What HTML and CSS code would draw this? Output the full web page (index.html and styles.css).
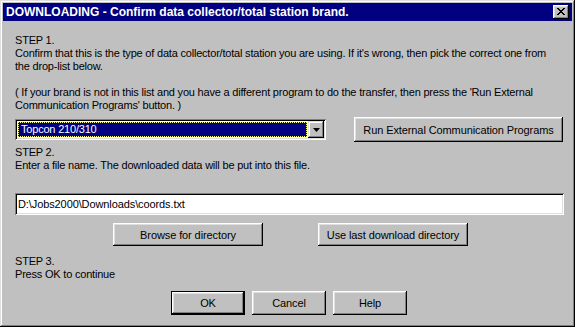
FILE: index.html
```html
<!DOCTYPE html>
<html lang="en">
<head>
  <meta charset="UTF-8">
  <title>DOWNLOADING</title>
  <link rel="stylesheet" href="styles.css">
</head>
<body>

  <div class="window">
    <div class="titlebar">
      <span class="title">DOWNLOADING - Confirm data collector/total station brand.</span>
      <button class="close" title="Close">
        <svg width="8" height="7" viewBox="0 0 8 7"><path d="M0 0h2v1h1v1h2v-1h1v-1h2v1h-1v1h-1v1h-1v1h1v1h1v1h1v1h-2v-1h-1v-1h-2v1h-1v1h-2v-1h1v-1h1v-1h1v-1h-1v-1h-1v-1h-1z" fill="#000"/></svg>
      </button>
    </div>

    <div class="content">
      <p class="text step1">STEP 1.<br>Confirm that this is the type of data collector/total station you are using. If it's wrong, then pick the correct one from<br>the drop-list below.</p>
      <p class="text note">( If your brand is not in this list and you have a different program to do the transfer, then press the 'Run External<br>Communication Programs' button. )</p>

      <div class="row combo-row">
        <div class="combo">
          <div class="combo-value"><span>Topcon 210/310</span></div>
          <div class="combo-arrow">
            <svg width="7" height="4" viewBox="0 0 7 4"><path d="M0 0h7l-3.5 4z" fill="#000"/></svg>
          </div>
        </div>
        <button class="btn btn-run">Run External Communication Programs</button>
      </div>

      <p class="text step2">STEP 2.<br>Enter a file name. The downloaded data will be put into this file.</p>
      <input class="field" type="text" value="D:\Jobs2000\Downloads\coords.txt">

      <div class="row browse-row">
        <button class="btn btn-wide">Browse for directory</button>
        <button class="btn btn-wide">Use last download directory</button>
      </div>

      <p class="text step3">STEP 3.<br>Press OK to continue</p>

      <div class="row actions">
        <button class="btn btn-small default">OK</button>
        <button class="btn btn-small">Cancel</button>
        <button class="btn btn-small">Help</button>
      </div>
    </div>
  </div>

</body>
</html>
```

FILE: styles.css
```css
* { margin: 0; padding: 0; box-sizing: border-box; }
body {
  font-family: 'Liberation Sans', Arial, sans-serif;
  font-size: 11px;
  letter-spacing: -0.2px;
  color: #000;
  background: #c0c0c0;
}
.window {
  width: 575px;
  height: 327px;
  background: #c0c0c0;
  padding: 3px;
  box-shadow: inset -1px -1px #000, inset 1px 1px #dfdfdf,
              inset -2px -2px #808080, inset 2px 2px #fff;
}
.titlebar {
  height: 18px;
  background: #000080;
  display: flex;
  align-items: center;
  justify-content: space-between;
  padding: 0 3px 0 3px;
}
.title {
  color: #fff;
  font-weight: bold;
  font-size: 12px;
  letter-spacing: 0;
  white-space: nowrap;
}
button {
  font-family: inherit;
  font-size: 11px;
  letter-spacing: -0.1px;
  color: #000;
  background: #c0c0c0;
  border: none;
  white-space: nowrap;
  box-shadow: inset -1px -1px #000, inset 1px 1px #fff,
              inset -2px -2px #808080, inset 2px 2px #dfdfdf;
  cursor: pointer;
}
.close {
  width: 16px;
  height: 14px;
  display: flex;
  align-items: center;
  justify-content: center;
  padding-bottom: 1px;
}
.content {
  padding: 13px 0 0 12px;
}
.text {
  line-height: 13px;
  white-space: nowrap;
}
.note { margin-top: 13px; }
.row { display: flex; align-items: center; }
.combo-row { margin-top: 5px; height: 25px; }
.combo {
  width: 311px;
  height: 21px;
  background: #fff;
  padding: 2px;
  display: flex;
  box-shadow: inset 1px 1px #808080, inset -1px -1px #fff,
              inset 2px 2px #000, inset -2px -2px #dfdfdf;
}
.combo-value {
  flex: 1;
  padding: 1px;
}
.combo-value span {
  display: block;
  height: 15px;
  line-height: 13px;
  padding-left: 2px;
  background: #000080;
  color: #fff;
  border: 1px dotted #ffff80;
}
.combo-arrow {
  width: 16px;
  height: 17px;
  background: #c0c0c0;
  display: flex;
  align-items: center;
  justify-content: center;
  box-shadow: inset -1px -1px #000, inset 1px 1px #dfdfdf,
              inset -2px -2px #808080, inset 2px 2px #fff;
}
.btn-run {
  width: 209px;
  height: 25px;
  margin-left: 28px;
}
.step2 { margin-top: 4px; }
.field {
  display: block;
  margin-top: 21px;
  width: 549px;
  height: 22px;
  border: none;
  background: #fff;
  font-family: inherit;
  font-size: 11px;
  letter-spacing: -0.1px;
  padding: 2px 3px;
  outline: none;
  box-shadow: inset 1px 1px #808080, inset -1px -1px #fff,
              inset 2px 2px #000, inset -2px -2px #dfdfdf;
}
.browse-row {
  margin-top: 8px;
  padding-left: 98px;
  gap: 55px;
}
.btn-wide { width: 150px; height: 23px; }
.step3 { margin-top: 9px; }
.actions {
  margin-top: 10px;
  padding-left: 156px;
  gap: 7px;
}
.btn-small { width: 74px; height: 24px; }
.default {
  box-shadow: inset 0 0 0 1px #000, inset -2px -2px #000, inset 2px 2px #fff,
              inset -3px -3px #808080, inset 3px 3px #dfdfdf;
}
```
